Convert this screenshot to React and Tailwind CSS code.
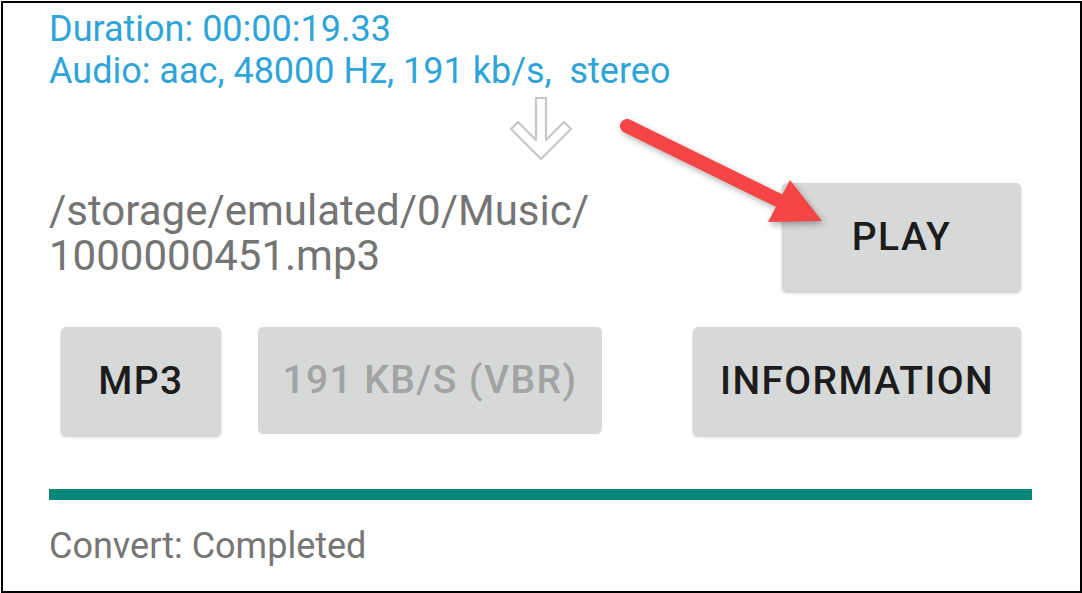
import React from "react";

function DownArrow() {
  return (
    <svg width="64" height="64" viewBox="0 0 64 64" className="block mx-auto">
      <path
        d="M27 1 L37 1 L37 43 L55 25 L62 32 L32 62 L2 32 L9 25 L27 43 Z"
        fill="#ffffff"
        stroke="#c6c6c6"
        strokeWidth="2.2"
        strokeLinejoin="round"
      />
    </svg>
  );
}

function Btn({ children, className = "", disabled = false }) {
  return (
    <div
      className={
        "flex items-center justify-center rounded-[5px] bg-[#d7d8d8] text-[39px] font-medium tracking-[0.035em] " +
        (disabled
          ? "text-[#a3a3a3]"
          : "text-[#1c1c1c] shadow-[0_2px_3px_rgba(0,0,0,0.22)]") +
        " " +
        className
      }
    >
      {children}
    </div>
  );
}

export default function App() {
  return (
    <div
      className="relative w-[1082px] h-[593px] bg-white overflow-hidden"
      style={{ fontFamily: "Roboto, 'Noto Sans', sans-serif" }}
    >
      <div className="ml-[1px] mt-[1px] w-[1081px] h-[592px] border-2 border-black bg-white">
        <div className="pl-[46px] pr-[48px] pt-[5px] flex flex-col">
          <div className="text-[36px] leading-[42px] text-[#2ea4d8]">
            <div>Duration: 00:00:19.33</div>
            <div>Audio: aac, 48000 Hz, 191 kb/s,&nbsp; stereo</div>
          </div>
          <div className="mt-[5px]">
            <DownArrow />
          </div>
          <div className="mt-[22px] flex items-start justify-between">
            <div className="mt-[5px] text-[42px] leading-[45px] text-[#747474]">
              <div>/storage/emulated/0/Music/</div>
              <div>1000000451.mp3</div>
            </div>
            <Btn className="w-[239px] h-[108px] mr-[11px]">PLAY</Btn>
          </div>
          <div className="mt-[36px] flex items-start">
            <Btn className="ml-[12px] w-[160px] h-[108px]">MP3</Btn>
            <Btn disabled className="ml-[37px] w-[344px] h-[107px]">
              191 KB/S (VBR)
            </Btn>
            <div className="flex-1" />
            <Btn className="w-[328px] h-[108px] mr-[11px]">INFORMATION</Btn>
          </div>
          <div className="mt-[54px] h-[11px] bg-[#04887a]" />
          <div className="mt-[26px] text-[36px] leading-[40px] text-[#767676]">
            Convert: Completed
          </div>
        </div>
      </div>
      <svg
        className="absolute left-0 top-0 pointer-events-none drop-shadow-[2px_3px_3px_rgba(0,0,0,0.3)]"
        width="1082"
        height="593"
        viewBox="0 0 1082 593"
      >
        <line
          x1="627"
          y1="126"
          x2="782"
          y2="202"
          stroke="#f54545"
          strokeWidth="14"
          strokeLinecap="round"
        />
        <polygon points="822,221 790,180 768,222" fill="#f54545" />
      </svg>
    </div>
  );
}
